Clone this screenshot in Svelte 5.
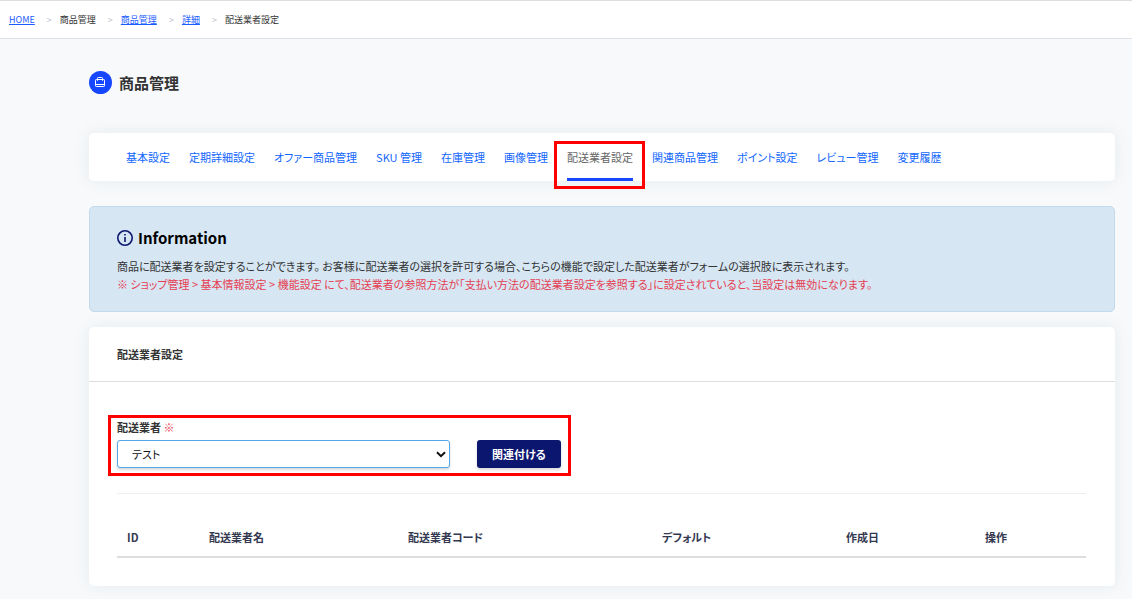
<script>
  const crumbs = [
    { label: 'HOME', link: true },
    { label: '商品管理', link: false },
    { label: '商品管理', link: true },
    { label: '詳細', link: true },
    { label: '配送業者設定', link: false }
  ];
  const tabs = [
    '基本設定', '定期詳細設定', 'オファー商品管理', 'SKU 管理', '在庫管理', '画像管理',
    '配送業者設定', '関連商品管理', 'ポイント設定', 'レビュー管理', '変更履歴'
  ];
  const active = '配送業者設定';
  const columns = [
    { label: 'ID', share: 82 },
    { label: '配送業者名', share: 199 },
    { label: '配送業者コード', share: 254 },
    { label: 'デフォルト', share: 184 },
    { label: '作成日', share: 139 },
    { label: '操作', share: 111 }
  ];
  const total = columns.reduce((sum, c) => sum + c.share, 0);
  let carrier = $state('テスト');
</script>

<nav class="crumbs" aria-label="breadcrumb">
  <ol>
    {#each crumbs as crumb}
      <li>
        {#if crumb.link}<a href="#top">{crumb.label}</a>{:else}<span>{crumb.label}</span>{/if}
      </li>
    {/each}
  </ol>
</nav>

<main>
  <header class="title">
    <span class="badge">
      <svg viewBox="0 0 23 23" width="23" height="23" fill="none" stroke="#fff" stroke-width="1" aria-hidden="true">
        <rect x="6.5" y="8.5" width="9" height="7" rx="0.8" />
        <path d="M8.5 9.8V7.3a.8.8 0 0 1 .8-.8h3.4a.8.8 0 0 1 .8.8v2.5M6.5 13.5h9" />
      </svg>
    </span>
    <h1>商品管理</h1>
  </header>

  <nav class="tabs panel" aria-label="tabs">
    {#each tabs as tab}
      <a href="#top" class:active={tab === active}>{tab}</a>
    {/each}
  </nav>

  <section class="info">
    <h2>
      <svg viewBox="0 0 16 16" width="16" height="16" aria-hidden="true">
        <circle cx="8" cy="8" r="7.2" fill="none" stroke="#0b176f" stroke-width="1.6" />
        <path d="M7.2 4h1.6v1.6H7.2zM7.2 7h1.6v5H7.2z" fill="#0b176f" />
      </svg>
      Information
    </h2>
    <p>商品に配送業者を設定することができます。 お客様に配送業者の選択を許可する場合、こちらの機能で設定した配送業者がフォームの選択肢に表示されます。</p>
    <p class="warn">※ ショップ管理 &gt; 基本情報設定 &gt; 機能設定 にて、配送業者の参照方法が「支払い方法の配送業者設定を参照する」に設定されていると、当設定は無効になります。</p>
  </section>

  <section class="panel card">
    <h3>配送業者設定</h3>
    <div class="body">
      <form class="assign" onsubmit={(e) => e.preventDefault()}>
        <div class="field">
          <label for="carrier">配送業者 <span class="req">※</span></label>
          <div class="select">
            <select id="carrier" bind:value={carrier}>
              <option>テスト</option>
            </select>
            <svg viewBox="0 0 10 7" width="10" height="7" aria-hidden="true">
              <path d="M1 1.2l4 4 4-4" fill="none" stroke="#111" stroke-width="2" />
            </svg>
          </div>
        </div>
        <button type="submit">関連付ける</button>
      </form>
      <table>
        <colgroup>
          {#each columns as c}<col style="width: {(c.share / total) * 100}%" />{/each}
        </colgroup>
        <thead>
          <tr>{#each columns as c}<th scope="col">{c.label}</th>{/each}</tr>
        </thead>
      </table>
    </div>
  </section>
</main>

<style>
  :global(body) {
    background: #f8f9fb;
    color: #333;
    font: 11px/18px "Noto Sans CJK JP", sans-serif;
    font-feature-settings: "palt";
  }
  h1, h2, h3, p, ol { margin: 0; padding: 0; }
  .crumbs {
    background: #fff;
    border-top: 1px solid #ddd;
    border-bottom: 1px solid #dfe1ea;
    padding: 10px 9px 9px;
    font-size: 9px;
  }
  .crumbs ol { display: flex; list-style: none; }
  .crumbs li + li::before {
    content: ">";
    color: #bcc1cc;
    margin: 0 8px 0 12px;
  }
  .crumbs a { color: #1a5cff; text-decoration: underline; }

  main { padding: 32px 17px 13px 89px; }
  .title { display: flex; align-items: center; gap: 7px; height: 23px; }
  .badge {
    display: flex;
    width: 23px;
    height: 23px;
    border-radius: 50%;
    background: #1746ff;
  }
  h1 { font-size: 15px; font-weight: 700; }

  .panel {
    background: #fff;
    border-radius: 5px;
    box-shadow: 0 0 16px rgba(80, 140, 140, 0.12);
  }
  .tabs {
    display: flex;
    gap: 19px;
    margin-top: 39px;
    padding: 0 37px;
  }
  .tabs a {
    position: relative;
    padding: 15px 0 12px;
    border-bottom: 3px solid transparent;
    color: #1266ff;
    text-decoration: none;
    white-space: nowrap;
  }
  .tabs a.active { color: #666; border-color: #1746ff; }
  .tabs a.active::after, .assign::after {
    content: "";
    position: absolute;
    border: 3px solid #f00;
    pointer-events: none;
  }
  .tabs a.active::after { inset: 8px -12px -11px -13px; }

  .info {
    margin-top: 25px;
    padding: 21px 27px 18px;
    background: #d6e6f3;
    border: 1px solid #c1daee;
    border-radius: 5px;
  }
  h2 {
    display: flex;
    align-items: center;
    gap: 5px;
    margin-bottom: 9px;
    color: #000;
    font-size: 15px;
    line-height: 20px;
    font-weight: 700;
  }
  .warn { color: #e63e52; }

  .card { margin-top: 15px; }
  h3 {
    padding: 18px 28px;
    border-bottom: 1px solid #ddd;
    font-size: 11px;
    font-weight: 700;
  }
  .body { padding: 36px 29px 28px 28px; }
  .assign {
    position: relative;
    display: flex;
    align-items: flex-end;
    gap: 27px;
    padding-bottom: 25px;
    border-bottom: 1px solid #eee;
  }
  .assign::after { inset: -3px auto 17px -9px; width: 457px; }
  .field { flex: 0 1 333px; }
  label { display: block; margin-bottom: 4px; font-weight: 700; }
  .req { color: #e63e52; font-weight: 400; }
  .select { position: relative; }
  select {
    appearance: none;
    display: block;
    width: 100%;
    height: 28px;
    padding: 0 14px;
    border: 1px solid #53a6e8;
    border-radius: 3px;
    background: #fff;
    box-shadow: 0 2px 3px rgba(0, 0, 0, 0.15);
    color: #111;
    font: inherit;
    font-feature-settings: inherit;
  }
  .select svg { position: absolute; right: 4px; top: 11px; pointer-events: none; }
  button {
    height: 28px;
    padding: 0 15px;
    border: 0;
    border-radius: 3px;
    background: #0b176f;
    box-shadow: 0 2px 3px rgba(0, 0, 0, 0.15);
    color: #fff;
    font: inherit;
    font-feature-settings: inherit;
    font-weight: 700;
  }
  table { width: 100%; margin-top: 25px; table-layout: fixed; border-collapse: collapse; }
  th {
    padding: 9px 10px 10px;
    border-bottom: 2px solid #ddd;
    color: #333850;
    text-align: left;
    font-weight: 700;
    white-space: nowrap;
  }
</style>
